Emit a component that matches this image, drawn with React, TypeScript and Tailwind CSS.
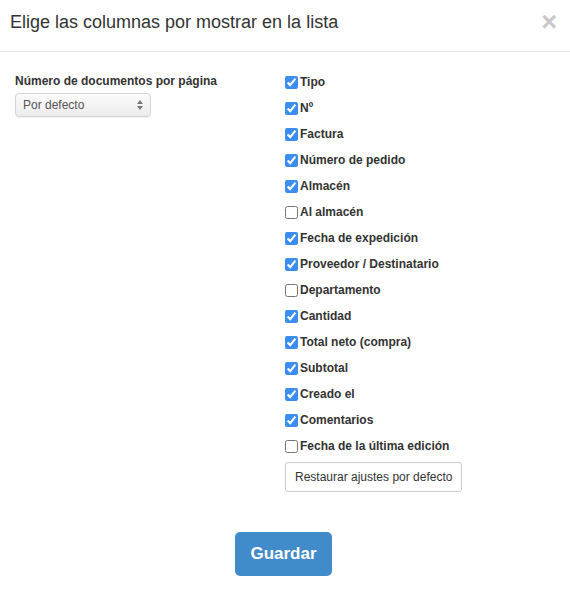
import { useState } from "react";

const COLUMNS: [string, boolean][] = [
  ["Tipo", true],
  ["Nº", true],
  ["Factura", true],
  ["Número de pedido", true],
  ["Almacén", true],
  ["Al almacén", false],
  ["Fecha de expedición", true],
  ["Proveedor / Destinatario", true],
  ["Departamento", false],
  ["Cantidad", true],
  ["Total neto (compra)", true],
  ["Subtotal", true],
  ["Creado el", true],
  ["Comentarios", true],
  ["Fecha de la última edición", false],
];

export default function App() {
  const [checked, setChecked] = useState(COLUMNS.map(([, on]) => on));

  return (
    <div className="w-[570px] h-[599px] bg-white text-[#333] font-['Liberation_Sans',Arial,sans-serif]">
      <div className="h-[52px] flex items-center justify-between pl-[10px] pr-[13px] border-b border-[#e5e5e5]">
        <h4 className="text-[18px] leading-[20px] pb-[8px]">
          Elige las columnas por mostrar en la lista
        </h4>
        <button className="text-[27px] leading-none font-bold text-[#c8c8c8] pb-[6px]">
          ×
        </button>
      </div>

      <div className="grid grid-cols-2 pt-[17px] px-[15px]">
        <div className="pr-[15px]">
          <label className="block text-[12px] font-bold leading-[17px] pt-[4px] mb-[3px]">
            Número de documentos por página
          </label>
          <div className="w-[136px] h-[24px] rounded-[4px] border border-[#d4d4d4] bg-gradient-to-b from-[#fbfbfb] to-[#ececec] flex items-center justify-between pl-[7px] pr-[7px] shadow-[0_1px_1px_rgba(0,0,0,0.06)]">
            <span className="text-[12px] text-[#555]">Por defecto</span>
            <span className="flex flex-col items-center gap-[2px]">
              <svg width="6" height="4" viewBox="0 0 6 4">
                <path d="M0 4 L3 0 L6 4 Z" fill="#777" />
              </svg>
              <svg width="6" height="4" viewBox="0 0 6 4">
                <path d="M0 0 L3 4 L6 0 Z" fill="#777" />
              </svg>
            </span>
          </div>
        </div>

        <div>
          {COLUMNS.map(([name], i) => (
            <label key={name} className="h-[26px] flex items-center gap-[2px] text-[12px] font-bold">
              <input
                type="checkbox"
                checked={checked[i]}
                onChange={() =>
                  setChecked((c) => c.map((v, j) => (j === i ? !v : v)))
                }
                className="m-0 w-[13px] h-[13px] accent-[#3b8ef0]"
              />
              {name}
            </label>
          ))}
          <button className="mt-[3px] h-[30px] px-[9px] rounded-[3px] border border-[#ccc] bg-white text-[12px] text-[#333]">
            Restaurar ajustes por defecto
          </button>
        </div>
      </div>

      <div className="flex justify-center pt-[40px] pr-[3px]">
        <button className="w-[97px] h-[44px] rounded-[5px] bg-[#428bca] text-white text-[17px] font-bold">
          Guardar
        </button>
      </div>
    </div>
  );
}
